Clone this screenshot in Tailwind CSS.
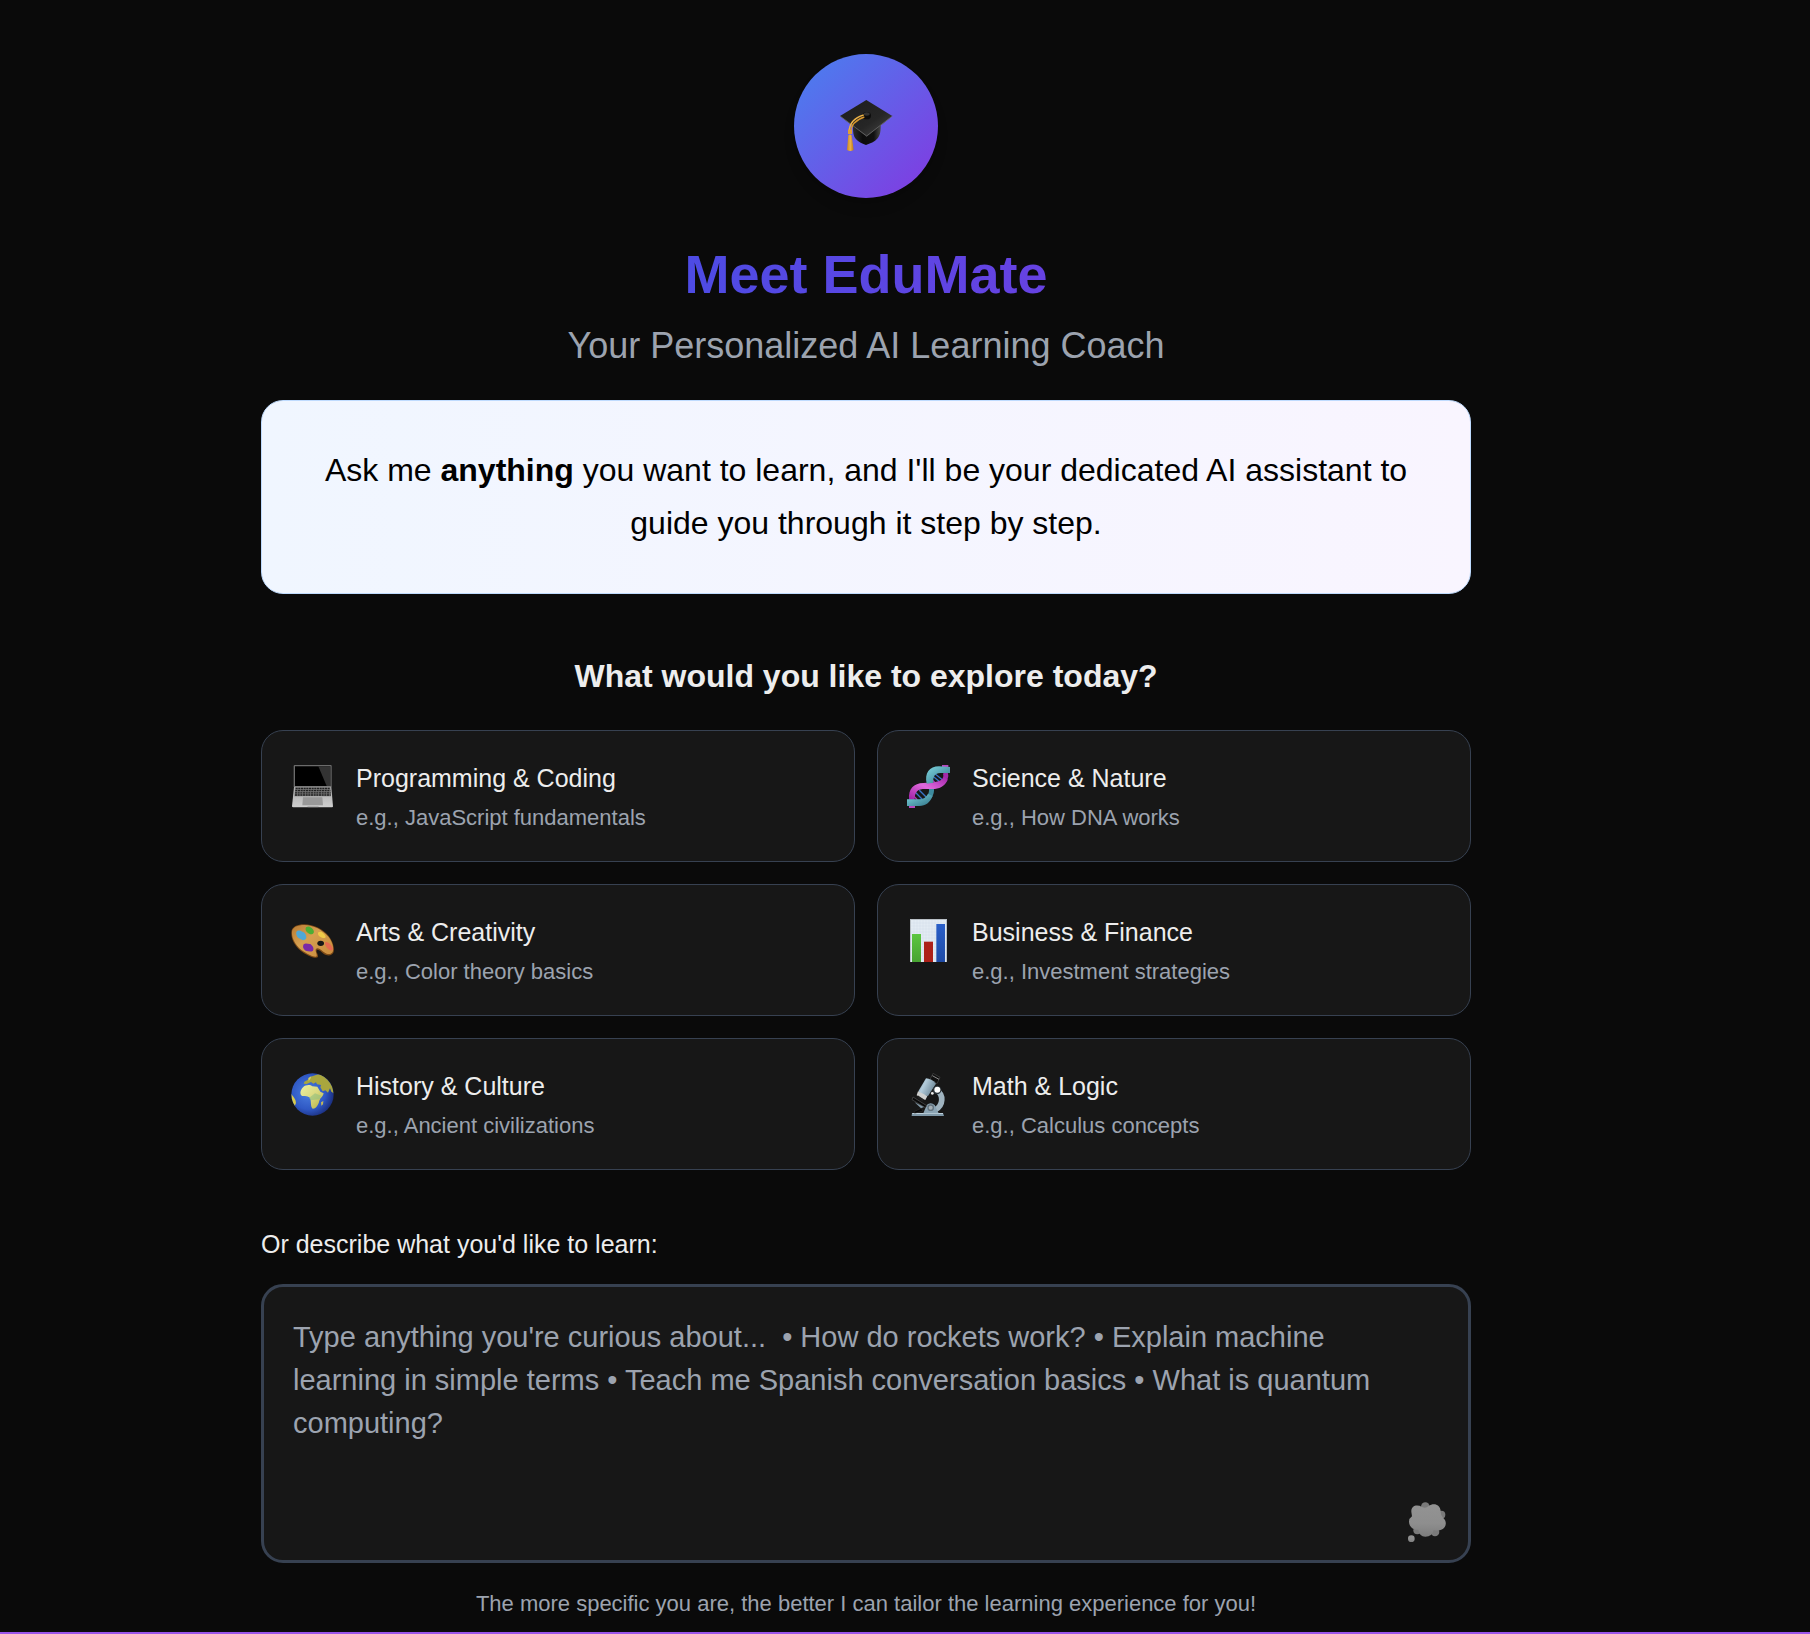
<!DOCTYPE html>
<html lang="en">
<head>
<meta charset="utf-8">
<meta name="viewport" content="width=device-width, initial-scale=1">
<title>EduMate</title>
<script src="https://cdn.jsdelivr.net/npm/@tailwindcss/browser@4"></script>
</head>
<body class="bg-[#0a0a0a] text-[#ededed] font-['Liberation_Sans',Arial,sans-serif]">
<div class="flex min-h-screen flex-col border-b-2 border-[#9b55ea] pr-[78px]">
<main class="mx-auto flex w-full max-w-[1210px] flex-col pt-[54px]">

  <header class="flex flex-col items-center text-center">
    <div class="flex size-36 items-center justify-center rounded-full bg-linear-to-br/srgb from-[#4782f0] to-[#8437e0] shadow-lg">
      <svg class="size-[54px]" viewBox="177 177 162 162" aria-hidden="true">
        <defs>
          <linearGradient id="capTop" x1="0" y1="0" x2="1" y2="1"><stop offset="0" stop-color="#1c1c1c"/><stop offset=".6" stop-color="#262626"/><stop offset="1" stop-color="#4a4a4a"/></linearGradient>
          <linearGradient id="capBase" x1="0" y1="0" x2="1" y2="0"><stop offset="0" stop-color="#2d2d2d"/><stop offset=".35" stop-color="#0b0b0b"/><stop offset=".75" stop-color="#111"/><stop offset="1" stop-color="#4a4a4a"/></linearGradient>
          <linearGradient id="tassel" x1="0" y1="0" x2="1" y2="0"><stop offset="0" stop-color="#c9861f"/><stop offset=".5" stop-color="#eab04a"/><stop offset="1" stop-color="#b97716"/></linearGradient>
        </defs>
        <path d="M219 248 L302 248 C303 272 301 284 293 295 C284 306 270 311 258 315 C243 309 230 303 223 290 C218 279 219 264 219 248Z" fill="url(#capBase)"/>
        <path d="M259 180 L337 228 L260 290 L180 228Z" fill="url(#capTop)"/>
        <path d="M180 228 L260 288 L337 228" fill="none" stroke="#686868" stroke-width="2.5"/>
        <ellipse cx="260" cy="227" rx="13" ry="11" fill="#0c0c0c"/>
        <ellipse cx="260" cy="222" rx="9" ry="5" fill="#333"/>
        <path d="M251 225 C226 232 208 245 207 277" fill="none" stroke="#efb548" stroke-width="4"/>
        <path d="M253 231 C232 238 213 249 212 277" fill="none" stroke="#d6962b" stroke-width="4"/>
        <path d="M204 269 h12 v13 h-12Z" fill="#e0a036"/>
        <path d="M205 286 Q210 281 215 286 L221 330 Q211 336 201 330Z" fill="url(#tassel)"/>
      </svg>
    </div>
    <h1 class="mt-11 w-full bg-linear-to-r/srgb from-[#3056e6] to-[#8437e0] bg-clip-text text-[54px] leading-[65px] font-bold text-transparent">Meet EduMate</h1>
    <p class="mt-[14px] text-4xl leading-[50px] text-[#9ca3af]">Your Personalized AI Learning Coach</p>
  </header>

  <section class="mt-[29px] rounded-[22px] border border-[#bfdbfe] bg-linear-to-r/srgb from-[#f0f6ff] to-[#f9f5ff] p-[43px] text-center text-black">
    <p class="text-[32px] leading-[53px]">Ask me <strong class="font-bold">anything</strong> you want to learn, and I'll be your dedicated AI assistant to guide you through it step by step.</p>
  </section>

  <section class="mt-[57px]">
    <h2 class="text-center text-[32px] leading-[50px] font-bold">What would you like to explore today?</h2>
    <div class="mt-[29px] grid grid-cols-2 gap-[22px]">

      <button type="button" class="flex items-start gap-[22px] rounded-[22px] border border-[#374151] bg-[#171717] p-[29px] text-left">
        <svg class="mt-[5px] size-[43px] shrink-0" viewBox="123 135 129 129" aria-hidden="true">
          <defs><linearGradient id="lapBase" x1="0" y1="0" x2="0" y2="1"><stop offset="0" stop-color="#a9a9a9"/><stop offset="1" stop-color="#cfcfcf"/></linearGradient></defs>
          <path d="M134 135 H242 Q245 135 245 138 V201 H131 V138 Q131 135 134 135Z" fill="#6b6b6b"/>
          <path d="M135 139 H241 V198 H135Z" fill="#000"/>
          <path d="M205 139 H241 V198 H230Z" fill="#333"/>
          <path d="M132 200 H244 L249 259 Q249 262 246 262 H130 Q126 262 126 259Z" fill="url(#lapBase)"/>
          <path d="M136 202 H241 L243 229 H133Z" fill="#777"/>
          <path d="M137 205.500H240 M136 212H241 M135 218.500H242 M135 225H242" stroke="#222" stroke-width="4" stroke-dasharray="6 2"/>
          <path d="M159 232 H217 L219 256 H157Z" fill="#999"/>
          <path d="M172 260 H206 L203 263 H175Z" fill="#555"/>
        </svg>
        <span class="flex flex-col gap-[7px]">
          <span class="text-[25px] leading-9">Programming &amp; Coding</span>
          <span class="text-[22px] leading-[29px] text-[#9ca3af]">e.g., JavaScript fundamentals</span>
        </span>
      </button>

      <button type="button" class="flex items-start gap-[22px] rounded-[22px] border border-[#374151] bg-[#171717] p-[29px] text-left">
        <svg class="mt-[5px] size-[43px] shrink-0" viewBox="141 135 129 129" aria-hidden="true">
          <defs>
            <linearGradient id="dnaBlue" x1="0" y1="0" x2="1" y2="1"><stop offset="0" stop-color="#7fd6e0"/><stop offset="1" stop-color="#2f7286"/></linearGradient>
            <linearGradient id="dnaPink" x1="0" y1="1" x2="1" y2="0"><stop offset="0" stop-color="#9d1ea4"/><stop offset=".5" stop-color="#e069dc"/><stop offset="1" stop-color="#a326aa"/></linearGradient>
          </defs>
          <path d="M214 165 L240 186 M222 159 L248 180 M166 217 L188 239 M178 211 L202 235" stroke="#3975c8" stroke-width="4"/>
          <path d="M213 176 L229 192 M158 225 L172 239" stroke="#a83ab4" stroke-width="4"/>
          <path d="M246 135 H265 V141 H246Z M147 257 H165 V264 H147Z" fill="#b64abf"/>
          <path d="M202 190 C219 197 219 222 201 237" fill="none" stroke="#3d8b9e" stroke-width="15"/>
          <path d="M256 158 C261 172 253 186 241 192" fill="none" stroke="#a22baa" stroke-width="15"/>
          <path d="M147 239 C145 205 161 190 190 189 L222 187 C237 185 247 179 254 171 L263 179 C253 200 238 207 217 207 L188 207 C169 209 164 221 164 239Z" fill="url(#dnaPink)"/>
          <path d="M270 141 V159 H241 C224 159 219 170 220 188 L200 191 C193 159 208 139 237 139Z" fill="url(#dnaBlue)"/>
          <path d="M141 238 H178 C190 238 198 232 204 222 L218 228 C210 248 197 258 178 258 H141Z" fill="url(#dnaBlue)"/>
        </svg>
        <span class="flex flex-col gap-[7px]">
          <span class="text-[25px] leading-9">Science &amp; Nature</span>
          <span class="text-[22px] leading-[29px] text-[#9ca3af]">e.g., How DNA works</span>
        </span>
      </button>

      <button type="button" class="flex items-start gap-[22px] rounded-[22px] border border-[#374151] bg-[#171717] p-[29px] text-left">
        <svg class="mt-[5px] size-[43px] shrink-0" viewBox="123 114 129 129" aria-hidden="true">
          <defs><linearGradient id="wood" x1="0" y1="0" x2="1" y2="1"><stop offset="0" stop-color="#b87a33"/><stop offset=".4" stop-color="#d6a050"/><stop offset="1" stop-color="#c98b3c"/></linearGradient></defs>
          <path d="M124 153 C125 137 143 130 163 130 C191 130 219 145 236 165 C248 179 254 200 251 213 C248 222 238 225 228 222 C217 218 211 206 202 206 C194 210 208 222 203 229 C196 234 174 224 160 215 C139 202 122 177 124 153Z" fill="#7c4a16"/>
          <path d="M126 152 C127 138 144 132 163 132 C191 132 218 147 234 166 C246 180 252 199 249 210 C246 219 238 221 230 218 C219 214 212 203 202 202 C190 205 203 219 200 226 C194 230 174 220 162 212 C141 199 124 175 126 152Z" fill="url(#wood)"/>
          <path d="M139 153 C144 146 151 149 157 152 C166 154 169 163 169 171 C164 180 157 178 151 174 C143 171 137 162 139 153Z" fill="#4fa8d6"/>
          <path d="M168 139 C174 134 180 137 185 141 C192 146 194 154 189 158 C182 162 177 158 173 155 C167 151 165 145 168 139Z" fill="#4cae35"/>
          <path d="M205 154 C213 149 221 156 226 164 C230 171 222 173 216 170 C208 168 201 160 205 154Z" fill="#f1cb48"/>
          <path d="M161 190 C168 185 174 190 181 189 C188 194 193 202 189 209 C182 214 174 210 167 209 C159 205 157 196 161 190Z" fill="#7a2aa6"/>
          <path d="M226 183 C233 181 242 188 247 199 C252 208 245 210 239 207 C231 203 223 192 226 183Z" fill="#e56a50"/>
          <ellipse cx="212" cy="187" rx="10" ry="8" fill="#171717"/>
        </svg>
        <span class="flex flex-col gap-[7px]">
          <span class="text-[25px] leading-9">Arts &amp; Creativity</span>
          <span class="text-[22px] leading-[29px] text-[#9ca3af]">e.g., Color theory basics</span>
        </span>
      </button>

      <button type="button" class="flex items-start gap-[22px] rounded-[22px] border border-[#374151] bg-[#171717] p-[29px] text-left">
        <svg class="mt-[5px] size-[43px] shrink-0" viewBox="111 114 129 129" aria-hidden="true">
          <defs>
            <linearGradient id="barGreen" x1="0" y1="0" x2="0" y2="1"><stop offset="0" stop-color="#5cc640"/><stop offset="1" stop-color="#48a332"/></linearGradient>
            <linearGradient id="barBlue" x1="0" y1="0" x2="0" y2="1"><stop offset="0" stop-color="#2a5fc8"/><stop offset="1" stop-color="#1f4ba6"/></linearGradient>
          </defs>
          <path d="M120 114 H231 V243 H120Z" fill="#b9c0c6"/>
          <path d="M123 117 H228 V243 H123Z" fill="#e3ebf3"/>
          <path d="M132 117V243 M141 117V243 M150 117V243 M159 117V243 M168 117V243 M177 117V243 M186 117V243 M195 117V243 M204 117V243 M213 117V243 M222 117V243 M123 126H228 M123 135H228 M123 144H228 M123 153H228 M123 162H228 M123 171H228 M123 180H228 M123 189H228 M123 198H228 M123 207H228 M123 216H228 M123 225H228 M123 234H228" stroke="#d2dde8" stroke-width="1.500"/>
          <path d="M126 159 H153 V243 H126Z" fill="url(#barGreen)"/>
          <path d="M162 182 H189 V243 H162Z" fill="#ad2118"/>
          <path d="M199 129 H225 V243 H199Z" fill="url(#barBlue)"/>
        </svg>
        <span class="flex flex-col gap-[7px]">
          <span class="text-[25px] leading-9">Business &amp; Finance</span>
          <span class="text-[22px] leading-[29px] text-[#9ca3af]">e.g., Investment strategies</span>
        </span>
      </button>

      <button type="button" class="flex items-start gap-[22px] rounded-[22px] border border-[#374151] bg-[#171717] p-[29px] text-left">
        <svg class="mt-[5px] size-[43px] shrink-0" viewBox="123 576 129 129" aria-hidden="true">
          <defs>
            <radialGradient id="sea" cx=".4" cy=".45" r=".62"><stop offset="0" stop-color="#4b7fe0"/><stop offset=".65" stop-color="#2f58c4"/><stop offset="1" stop-color="#1a2d7c"/></radialGradient>
            <linearGradient id="land" x1="0" y1="0" x2="1" y2="1"><stop offset="0" stop-color="#eef0a0"/><stop offset=".5" stop-color="#d9d980"/><stop offset="1" stop-color="#b5ae3e"/></linearGradient>
            <clipPath id="globe"><circle cx="187.500" cy="640.500" r="63"/></clipPath>
          </defs>
          <circle cx="187.500" cy="640.500" r="63.500" fill="url(#sea)"/>
          <g clip-path="url(#globe)">
            <path d="M163 602 L173 597 L180 588 L191 584 L207 579 L232 588 L250 612 L253 638 L244 632 L240 622 L234 635 L226 628 L218 631 L211 619 L213 612 L201 610 L198 604 L190 608 L183 603 L170 609 L161 608Z" fill="#a9a63e"/>
            <path d="M175 591 L184 586 L181 594 L176 600Z" fill="#d2d06a"/>
            <path d="M160 618 C167 611 181 610 187 616 L202 617 L211 632 L221 637 C220 646 211 650 208 659 C205 673 196 684 188 683 C181 676 184 663 181 653 C179 646 169 646 157 645 C149 642 149 628 160 618Z" fill="url(#land)"/>
            <path d="M177 651 L195 637 L214 644 L208 655 L182 658Z" fill="#91c080" opacity=".6"/>
            <path d="M213 664 L220 660 L219 670 L214 674Z" fill="#c5b957"/>
            <path d="M122 638 C132 647 140 659 137 669 L131 678 L122 664Z" fill="#d8cb4c"/>
          </g>
        </svg>
        <span class="flex flex-col gap-[7px]">
          <span class="text-[25px] leading-9">History &amp; Culture</span>
          <span class="text-[22px] leading-[29px] text-[#9ca3af]">e.g., Ancient civilizations</span>
        </span>
      </button>

      <button type="button" class="flex items-start gap-[22px] rounded-[22px] border border-[#374151] bg-[#171717] p-[29px] text-left">
        <svg class="mt-[5px] size-[43px] shrink-0" viewBox="111 576 129 129" aria-hidden="true">
          <defs><linearGradient id="tube" x1="0" y1="0" x2="1" y2=".5"><stop offset="0" stop-color="#6f8b9c"/><stop offset=".4" stop-color="#b4cddc"/><stop offset="1" stop-color="#6c8696"/></linearGradient></defs>
          <path d="M200 628 C222 641 220 674 196 686" fill="none" stroke="#9fb3bf" stroke-width="17"/>
          <path d="M126 696 H219 L222 705 H125Z" fill="#7f98a8"/>
          <path d="M127 696 H219 V699 H127Z" fill="#bdd0db"/>
          <path d="M160 697 L170 672 Q182 661 194 672 L206 697Z" fill="#8ba4b4"/>
          <circle cx="182" cy="680" r="10" fill="#63737e"/><circle cx="182" cy="680" r="6" fill="#a5afb5"/>
          <path d="M129 648 L170 674 L166 680 L126 656Z" fill="#090909" stroke="#555" stroke-width="2"/>
          <path d="M134 664 L162 678 L153 682Z" fill="#8299a8"/>
          <path d="M132 692 L154 682 L158 690 L134 697Z" fill="#080808" stroke="#444" stroke-width="1"/>
          <path d="M189 577 L210 589 L201 608 L180 595Z" fill="#101010" stroke="#4a4a4a" stroke-width="2"/>
          <path d="M187 584 L207 595" stroke="#8c8c8c" stroke-width="3"/>
          <path d="M168 592 Q184 593 198 608 L174 645 Q158 645 145 631Z" fill="url(#tube)"/>
          <path d="M144 631 Q158 637 172 646 L166 657 Q151 653 140 643Z" fill="#cfd1d0"/>
          <path d="M143 643 L161 655 L158 661 L144 652Z" fill="#222"/>
          <circle cx="201" cy="627" r="13" fill="#2b343a"/><circle cx="202" cy="626" r="9" fill="#fff"/>
          <circle cx="187" cy="637" r="6" fill="#333"/><circle cx="187" cy="637" r="4" fill="#eee"/>
        </svg>
        <span class="flex flex-col gap-[7px]">
          <span class="text-[25px] leading-9">Math &amp; Logic</span>
          <span class="text-[22px] leading-[29px] text-[#9ca3af]">e.g., Calculus concepts</span>
        </span>
      </button>
    </div>
  </section>

  <section class="mt-14 flex flex-col">
    <label for="topic" class="text-[25px] leading-9">Or describe what you'd like to learn:</label>
    <div class="relative mt-[22px] flex">
      <textarea id="topic" class="h-[279px] w-full resize-none rounded-[22px] border-3 border-[#374151] bg-[#171717] py-[29px] pr-[58px] pl-[29px] text-[29px] leading-[43px] placeholder:text-[#9ca3af]" placeholder="Type anything you're curious about...  • How do rockets work? • Explain machine learning in simple terms • Teach me Spanish conversation basics • What is quantum computing?"></textarea>
      <svg class="pointer-events-none absolute right-[22px] bottom-[19px] size-[43px]" viewBox="318 243 129 129" aria-hidden="true">
        <defs><linearGradient id="puff" x1="0" y1="0" x2="0" y2="1"><stop offset="0" stop-color="#939393"/><stop offset=".6" stop-color="#8e8e8e"/><stop offset="1" stop-color="#7c7c7c"/></linearGradient></defs>
        <g fill="#7a7a7a">
          <circle cx="376" cy="260" r="13"/><circle cx="424" cy="284" r="12"/><circle cx="352" cy="331" r="12"/><circle cx="405" cy="336" r="13"/>
        </g>
        <path d="M334 275 C333 257 351 252 366 261 Q377 267 386 258 C402 246 421 255 422 273 Q421 284 429 293 C441 302 440 321 427 328 Q415 334 401 330 Q397 350 376 350 Q358 349 355 329 C340 331 327 320 327 305 Q327 295 336 289Z" fill="url(#puff)"/>
        <circle cx="334" cy="356" r="10" fill="url(#puff)"/>
      </svg>
    </div>
    <p class="mt-[26px] text-center text-[22px] leading-[29px] text-[#9ca3af]">The more specific you are, the better I can tailor the learning experience for you!</p>
  </section>

</main>
</div>
</body>
</html>
